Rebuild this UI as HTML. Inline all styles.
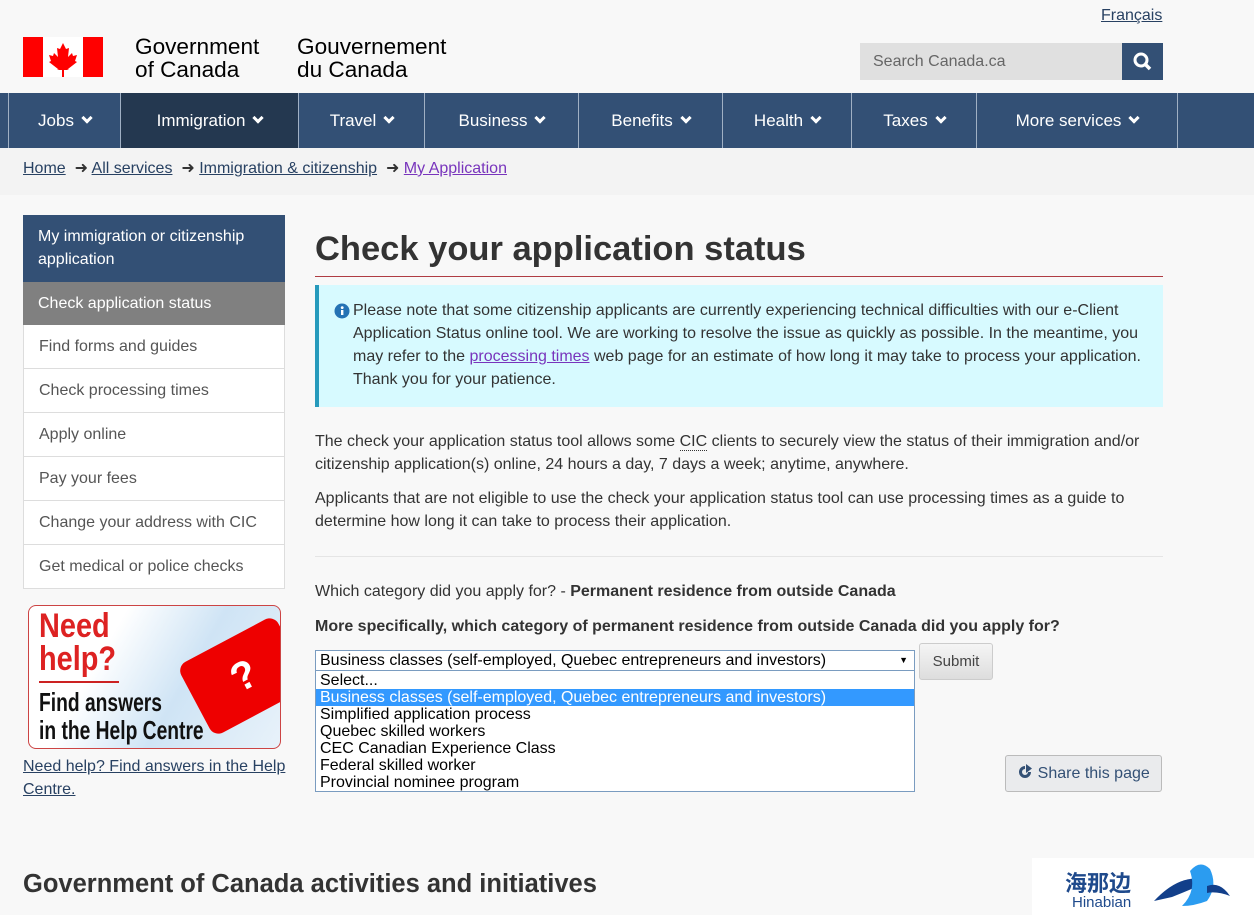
<!DOCTYPE html>
<html><head><meta charset="utf-8"><style>
*{margin:0;padding:0;box-sizing:border-box}
body{width:1254px;height:915px;overflow:hidden;background:#f8f8f8;font-family:"Liberation Sans",Arial,sans-serif;color:#333;position:relative;font-size:16px}
.a{position:absolute}
a{color:#284162;text-decoration:underline}
.nav{top:93px;left:0;width:1254px;height:55px;background:#335075}
.nav div{position:absolute;top:0;height:55px;border-left:1px solid #a0b0c4;color:#fff;font-size:17px;line-height:55px;text-align:center}
.chev{display:inline-block;width:8px;height:8px;border-right:3px solid #fff;border-bottom:3px solid #fff;transform:rotate(45deg);margin-left:9px;position:relative;top:-4px}
.side div{position:absolute;left:23px;width:262px;background:#fff;border:1px solid #ddd;border-top:none;font-size:16px;color:#555;padding-left:15px;height:44px;line-height:43px}
p{font-size:16px;line-height:23px}
.opt{height:17px;line-height:17px;font-size:16px;padding-left:4px;color:#000}
</style></head><body>
<a class="a" style="top:7px;left:1101px;font-size:16px;color:#284162">Français</a>
<svg class="a" style="top:37px;left:23px" width="80" height="40" viewBox="0 0 80 40"><rect width="80" height="40" fill="#fff"/><rect width="20" height="40" fill="#f00"/><rect x="60" width="20" height="40" fill="#f00"/><path d="M40 6l-3 6-3-1 1 9-4-4-1 3-4-1 2 6-2 1 9 7h-1l2 1h3v7h2v-7h3l2-1h-1l9-7-2-1 2-6-4 1-1-3-4 4 1-9-3 1z" fill="#f00"/></svg>
<div class="a" style="top:35px;left:135px;font-size:22.6px;line-height:23px;color:#000">Government<br>of Canada</div>
<div class="a" style="top:35px;left:297px;font-size:22.6px;line-height:23px;color:#000">Gouvernement<br>du Canada</div>
<div class="a" style="top:43px;left:860px;width:262px;height:37px;background:#e0e0e0;color:#666;font-size:16px;line-height:37px;padding-left:13px">Search Canada.ca</div>
<div class="a" style="top:43px;left:1122px;width:41px;height:37px;background:#335075"><svg width="41" height="37"><circle cx="19" cy="17" r="6" stroke="#fff" stroke-width="3" fill="none"/><path d="M23 21l5 5" stroke="#fff" stroke-width="3.5"/></svg></div>
<div class="a nav">
<div style="left:8px;width:112px">Jobs<span class="chev"></span></div>
<div style="left:120px;width:178px;background:#243850">Immigration<span class="chev"></span></div>
<div style="left:298px;width:126px">Travel<span class="chev"></span></div>
<div style="left:424px;width:154px">Business<span class="chev"></span></div>
<div style="left:578px;width:144px">Benefits<span class="chev"></span></div>
<div style="left:722px;width:129px">Health<span class="chev"></span></div>
<div style="left:851px;width:125px">Taxes<span class="chev"></span></div>
<div style="left:976px;width:201px">More services<span class="chev"></span></div>
<div style="left:1177px;width:77px"></div>
</div>
<div class="a" style="top:148px;left:0;width:1254px;height:47px;background:#f3f3f3"></div>
<div class="a" style="top:158px;left:23px;font-size:16px">
<a>Home</a> &nbsp;➜ <a>All services</a> &nbsp;➜ <a>Immigration &amp; citizenship</a> &nbsp;➜ <a style="color:#7834bc">My Application</a></div>
<div class="side">
<div style="top:215px;height:67px;background:#335075;color:#fff;line-height:23px;padding-top:10px;border:none">My immigration or citizenship application</div>
<div style="top:282px;height:43px;background:#808080;color:#fff;border:none;line-height:43px">Check application status</div>
<div style="top:325px">Find forms and guides</div>
<div style="top:369px">Check processing times</div>
<div style="top:413px">Apply online</div>
<div style="top:457px">Pay your fees</div>
<div style="top:501px">Change your address with CIC</div>
<div style="top:545px">Get medical or police checks</div>
</div>
<div class="a" style="top:605px;left:28px;width:253px;height:144px;border:1px solid #c44;border-radius:8px;background:linear-gradient(120deg,#fff 30%,#cfe4f5 60%,#e8f2fa);overflow:hidden">
<div class="a" style="left:160px;top:30px;width:110px;height:80px;background:#e00;border-radius:10px;transform:rotate(-28deg);color:#fff;font-size:40px;font-weight:bold;text-align:center;line-height:80px">?</div>
<div class="a" style="left:10px;top:4px;color:#d22;font-size:34px;font-weight:bold;line-height:33px;transform:scaleX(.85);transform-origin:left">Need<br>help?</div>
<div class="a" style="left:10px;top:75px;width:80px;height:2px;background:#c22"></div>
<div class="a" style="left:10px;top:82px;color:#111;font-size:26px;font-weight:bold;line-height:28px;transform:scaleX(.74);transform-origin:left;white-space:nowrap">Find answers<br>in the Help Centre</div>
</div>
<a class="a" style="top:755px;left:23px;width:270px;font-size:16px;line-height:23px">Need help? Find answers in the Help Centre.</a>
<h1 class="a" style="top:230px;left:315px;font-size:34.5px;color:#333">Check your application status</h1>
<div class="a" style="top:276px;left:315px;width:848px;height:1px;background:#af3c43"></div>
<div class="a" style="top:285px;left:315px;width:848px;height:122px;background:#d7faff;border-left:4px solid #269abc;padding:14px 0 0 34px">
<svg class="a" style="left:15px;top:18px" width="16" height="16"><circle cx="8" cy="8" r="7.5" fill="#2572b4"/><rect x="7" y="7" width="2.4" height="5" fill="#fff"/><circle cx="8.2" cy="4.6" r="1.4" fill="#fff"/></svg>
<p style="color:#333">Please note that some citizenship applicants are currently experiencing technical difficulties with our e-Client Application Status online tool. We are working to resolve the issue as quickly as possible. In the meantime, you may refer to the <a style="color:#7834bc">processing times</a> web page for an estimate of how long it may take to process your application. Thank you for your patience.</p></div>
<p class="a" style="top:430px;left:315px;width:850px">The check your application status tool allows some <span style="border-bottom:1px dotted #333">CIC</span> clients to securely view the status of their immigration and/or citizenship application(s) online, 24 hours a day, 7 days a week; anytime, anywhere.</p>
<p class="a" style="top:487px;left:315px;width:850px">Applicants that are not eligible to use the check your application status tool can use processing times as a guide to determine how long it can take to process their application.</p>
<div class="a" style="top:556px;left:315px;width:848px;height:1px;background:#e5e5e5"></div>
<p class="a" style="top:580px;left:315px">Which category did you apply for? - <b>Permanent residence from outside Canada</b></p>
<p class="a" style="top:615px;left:315px"><b>More specifically, which category of permanent residence from outside Canada did you apply for?</b></p>
<div class="a" style="top:650px;left:315px;width:600px;height:21px;border:1px solid #7a9cc0;background:#fff;font-size:16px;line-height:19px;padding-left:4px;color:#000">Business classes (self-employed, Quebec entrepreneurs and investors)<span style="position:absolute;right:6px;font-size:9px">▼</span></div>
<div class="a" style="top:671px;left:315px;width:600px;height:121px;border:1px solid #7a9cc0;border-top:none;background:#fff;padding-top:1px">
<div class="opt">Select...</div>
<div class="opt" style="background:#3399ff;color:#fff">Business classes (self-employed, Quebec entrepreneurs and investors)</div>
<div class="opt">Simplified application process</div>
<div class="opt">Quebec skilled workers</div>
<div class="opt">CEC Canadian Experience Class</div>
<div class="opt">Federal skilled worker</div>
<div class="opt">Provincial nominee program</div>
</div>
<div class="a" style="top:643px;left:919px;width:74px;height:37px;border:1px solid #ccc;border-radius:3px;background:linear-gradient(#f5f5f5,#ddd);font-size:15px;line-height:35px;text-align:center;color:#444">Submit</div>
<div class="a" style="top:755px;left:1005px;width:157px;height:37px;border:1px solid #bbb;border-radius:3px;background:#eaebed;font-size:16px;line-height:35px;text-align:center;color:#335075">
<svg width="16" height="16" style="vertical-align:-2px" viewBox="0 0 16 16"><path d="M8 2a6 6 0 1 0 6 6h-3a3 3 0 1 1-3-3z" fill="#335075"/><path d="M9 0l6 4.5-6 4.5z" fill="#335075"/></svg> Share this page</div>
<h2 class="a" style="top:870px;left:23px;font-size:25.5px;color:#333">Government of Canada activities and initiatives</h2>
<div class="a" style="top:858px;left:1032px;width:222px;height:57px;background:#fff">
<div class="a" style="left:33px;top:12px;font-family:'Noto Sans CJK SC',sans-serif;font-size:22px;line-height:24px;color:#1f4a8c;font-weight:bold">海那边</div>
<div class="a" style="left:40px;top:36px;font-size:15px;color:#1f4a8c">Hinabian</div>
<svg class="a" style="left:120px;top:3px" width="80" height="50"><path d="M2 40 Q30 10 58 20 Q40 28 20 36 Z" fill="#123f8a"/><path d="M38 10 Q48 -2 58 8 Q66 25 55 40 Q42 45 30 45 Q45 30 38 10Z" fill="#2b9cf0"/><path d="M55 25 Q68 20 78 35 Q65 30 55 32Z" fill="#123f8a"/></svg>
</div>
</body></html>
